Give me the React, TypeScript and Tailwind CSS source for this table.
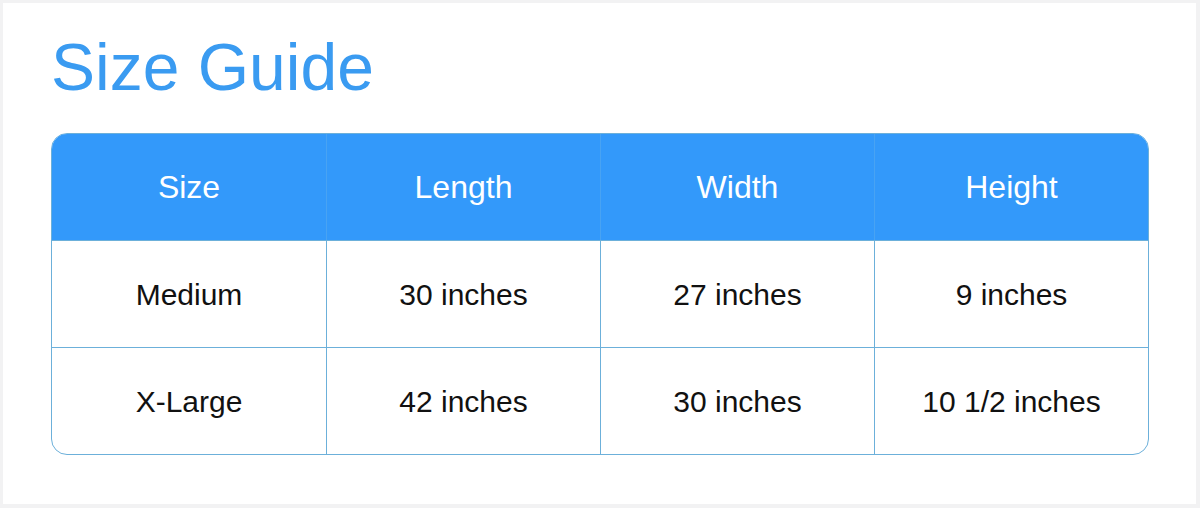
import React from 'react';

const headers = ['Size', 'Length', 'Width', 'Height'];

const rows = [
  ['Medium', '30 inches', '27 inches', '9 inches'],
  ['X-Large', '42 inches', '30 inches', '10 1/2 inches'],
];

export default function App() {
  return (
    <div className="w-[1200px] h-[508px] bg-[#f2f2f3] pt-[3px] pl-[3px] pr-[4px] pb-[4px] font-['Liberation_Sans',Arial,sans-serif]">
      <div className="h-full bg-white pt-[31px] pl-[48px] pr-[47px]">
        <h1 className="text-[66px] leading-[66px] text-[#3a9bf1] font-normal">Size Guide</h1>

        <div className="mt-[33px] border border-[#6cb0da] rounded-2xl overflow-hidden">
          {/* header */}
          <div className="grid grid-cols-4 h-[106px] bg-[#3399fa]">
            {headers.map((h, i) => (
              <div
                key={h}
                className={
                  'flex items-center justify-center text-[32px] text-white' +
                  (i > 0 ? ' border-l border-[#48a3f3]' : '')
                }
              >
                {h}
              </div>
            ))}
          </div>

          {/* rows */}
          {rows.map((row) => (
            <div key={row[0]} className="grid grid-cols-4 h-[107px] border-t border-[#6cb0da]">
              {row.map((cell, i) => (
                <div
                  key={i}
                  className={
                    'flex items-center justify-center text-[30px] text-[#111]' +
                    (i > 0 ? ' border-l border-[#6cb0da]' : '')
                  }
                >
                  {cell}
                </div>
              ))}
            </div>
          ))}
        </div>
      </div>
    </div>
  );
}
